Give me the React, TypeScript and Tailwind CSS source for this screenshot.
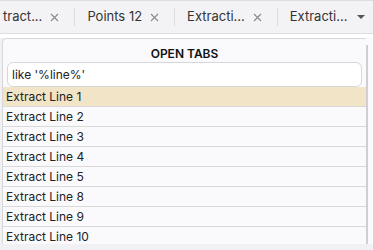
import React from 'react';

const tabs = [
  { label: 'tract...', close: true },
  { label: 'Points 12', close: true },
  { label: 'Extracti...', close: true },
  { label: 'Extracti...', close: false },
];

const rows = [
  'Extract Line 1',
  'Extract Line 2',
  'Extract Line 3',
  'Extract Line 4',
  'Extract Line 5',
  'Extract Line 8',
  'Extract Line 9',
  'Extract Line 10',
];

const CloseIcon = () => (
  <svg width="9" height="9" viewBox="0 0 9 9" className="ml-[8px]">
    <path d="M1 1 L8 8 M8 1 L1 8" stroke="#8a8a8e" strokeWidth="1.1" />
  </svg>
);

const App = () => {
  return (
    <div className="w-[373px] h-[250px] overflow-hidden bg-white font-['Inter',sans-serif] text-[#333]">
      <div className="h-[34px] flex items-center bg-[#f3f3f6] border-t border-b border-[#dcdde3] text-[13px]">
        <div className="flex items-center flex-1 overflow-hidden">
          {tabs.map((t, i) => (
            <div key={i} className="flex items-center shrink-0">
              {i > 0 && <div className="w-px h-[18px] bg-[#dcdde3]" />}
              <div className={`flex items-center ${i === 0 ? 'pl-0 pr-[15px]' : 'pl-[12px] pr-[15px]'}`}>
                <span className={i === 0 ? 'ml-[3px]' : ''}>{t.label}</span>
                {t.close && <CloseIcon />}
              </div>
            </div>
          ))}
        </div>
        <svg width="10" height="6" viewBox="0 0 10 6" className="mr-[7px] shrink-0">
          <path d="M1 1 L5 5 L9 1 Z" fill="#555" />
        </svg>
      </div>
      <div className="flex mt-[4px] h-[212px] bg-[#f1f1f3]">
        <div className="flex-1 ml-[2px] flex flex-col border-t border-l border-[#d6d7dd] rounded-tl-[5px] bg-[#fafafc] overflow-hidden h-[206px]">
          <div className="text-center font-semibold text-[12px] h-[23px] flex items-center justify-center pt-[7px] text-[#111]">OPEN TABS</div>
          <div className="px-[4px]">
            <div className="h-[25px] border border-[#d6d7dd] rounded-[6px] bg-white flex items-center px-[4px] text-[12px] text-[#222]">
              like '%line%'
            </div>
          </div>
          <div className="text-[12px] text-[#222] border-b border-[#e4e4e8]">
            {rows.map((r, i) => (
              <div
                key={r}
                className={`h-[20px] flex items-center pl-[3px] border-b border-[#d9d9d9] ${i === 0 ? 'bg-[#f2e4c6]' : 'bg-[#fafafc]'}`}
              >
                {r}
              </div>
            ))}
          </div>
        </div>
        <div className="w-[7px] flex flex-col bg-[#fafafc] h-[206px]">
          <div className="h-[7px]" />
          <div className="w-[2px] flex-1 bg-[#cfcfd2]" />
        </div>
      </div>
    </div>
  );
};

export default App;
